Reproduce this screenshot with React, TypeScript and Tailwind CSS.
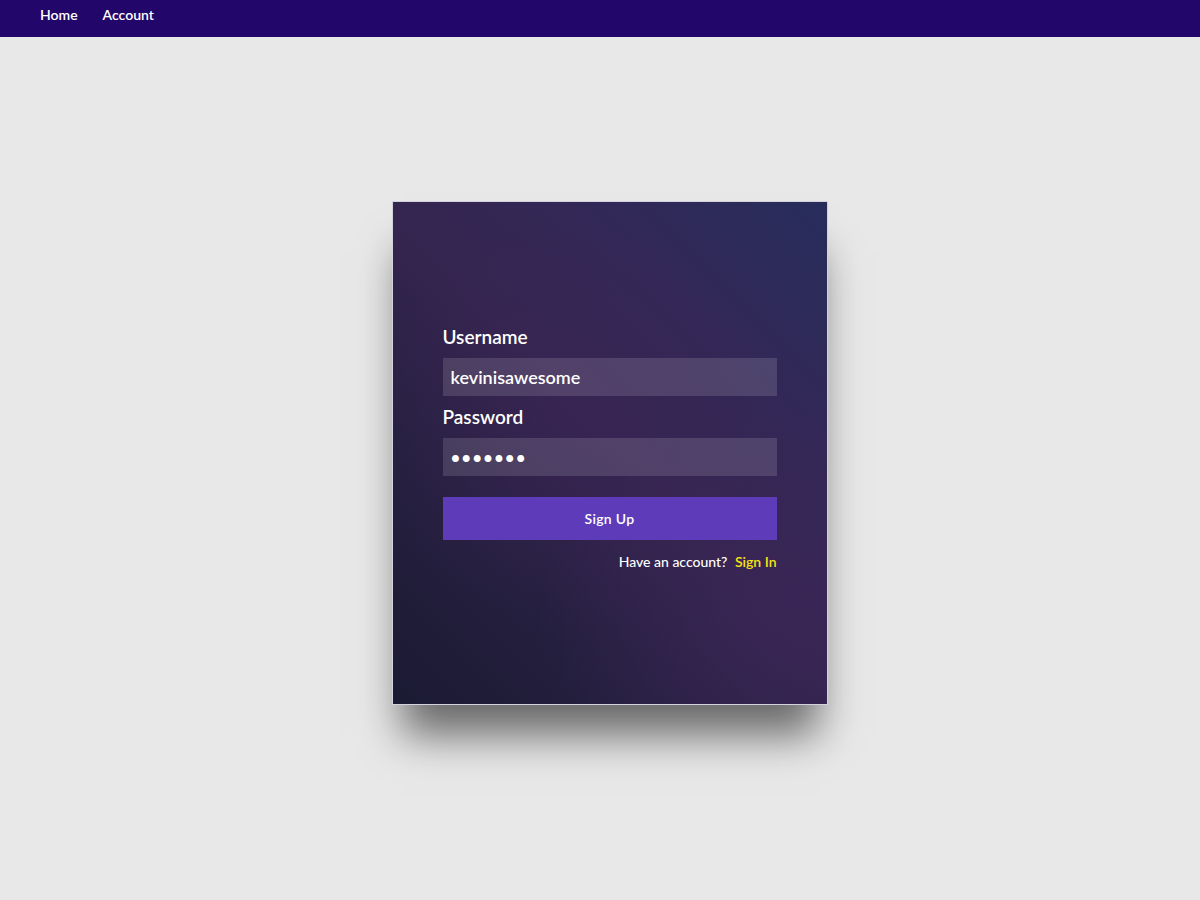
const App = () => {
  return (
    <div className="min-h-[900px] w-full bg-[#e8e8e8] font-['Lato','Noto_Sans',sans-serif]">
      <nav className="flex h-[37px] items-start gap-[25px] bg-[#22066a] pl-[40px] pt-[4px] text-[14px] font-semibold text-white">
        <a href="#">Home</a>
        <a href="#">Account</a>
      </nav>

      <div className="flex justify-center pt-[164px]">
        <div className="relative ml-[19px] h-[504px] w-[436px] border border-[#d4d2dc] shadow-[0_40px_40px_-10px_rgba(0,0,0,0.55)]">
          <div className="absolute inset-0 bg-[linear-gradient(45deg,#1b1a33_0%,#262040_30%,#352550_52%,#322857_75%,#272d5b_100%)]" />
          <div className="absolute inset-0 bg-[radial-gradient(circle_at_40%_45%,rgba(62,36,88,0.45)_0%,rgba(62,36,88,0)_55%)]" />
          <div className="absolute inset-0 bg-[radial-gradient(circle_at_85%_85%,rgba(64,38,92,0.5)_0%,rgba(64,38,92,0)_40%)]" />
          <form className="relative flex h-full flex-col justify-center px-[50px] pb-[8px]">
            <label htmlFor="username" className="mb-[10px] text-[19px] font-semibold leading-[22px] text-white">Username</label>
            <input id="username" type="text" defaultValue="kevinisawesome" className="h-[38px] w-full bg-white/[0.13] px-[8px] text-[18px] font-semibold text-white outline-none" />
            <label htmlFor="password" className="mb-[10px] mt-[10px] text-[19px] font-semibold leading-[22px] text-white">Password</label>
            <input id="password" type="password" defaultValue="kevinis" className="h-[38px] w-full bg-white/[0.13] px-[8px] text-[17px] font-semibold tracking-[1px] text-white outline-none" />
            <button type="button" className="mt-[21px] h-[43px] w-full bg-[#5e3bb9] text-[14px] font-semibold tracking-[0.3px] text-white">Sign Up</button>
            <p className="mt-[11px] text-right text-[14px] font-medium text-white">
              Have an account? <a href="#" className="ml-[4px] font-semibold text-[#f7e313]">Sign In</a>
            </p>
          </form>
        </div>
      </div>
    </div>
  )
}

export default App
